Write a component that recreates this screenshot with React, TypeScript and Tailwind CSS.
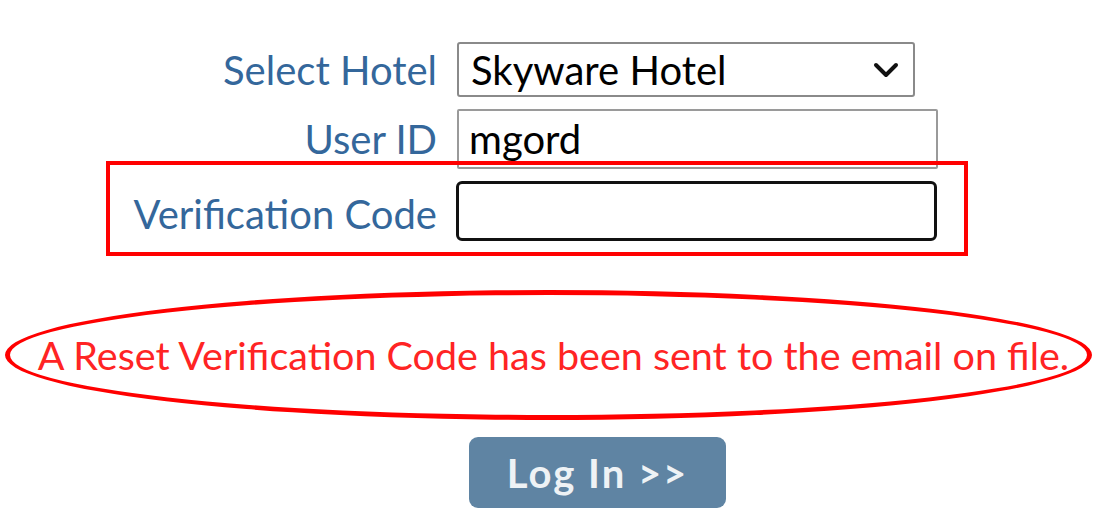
import React from 'react';

const labelCls = "text-[40px] leading-none text-[#34679b] text-right whitespace-nowrap";

const App = () => {
    return (
        <div className="min-h-[519px] w-[1102px] bg-white font-['Lato','Noto_Sans',sans-serif] overflow-hidden">
            <div className="flex flex-col pt-[42px]">
                {/* Select Hotel */}
                <div className="flex items-center">
                    <label className={`w-[437px] ${labelCls}`}>Select Hotel</label>
                    <div className="ml-[20px] flex h-[55px] w-[458px] items-center justify-between rounded-[3px] border-2 border-[#8a8a8a] pl-[12px] pr-[14px]">
                        <span className="text-[40px] leading-none text-black">Skyware Hotel</span>
                        <svg width="26" height="18" viewBox="0 0 26 18" fill="none">
                            <path d="M3 4l10 10L23 4" stroke="#111" strokeWidth="4" strokeLinecap="round" strokeLinejoin="round" />
                        </svg>
                    </div>
                </div>

                {/* User ID */}
                <div className="mt-[12px] flex items-center">
                    <label className={`w-[437px] ${labelCls}`}>User ID</label>
                    <div className="ml-[20px] flex h-[60px] w-[481px] items-start rounded-[2px] border-2 border-[#9a9a9a] pl-[10px] pt-[8px]">
                        <span className="text-[40px] leading-none text-black">mgord</span>
                    </div>
                </div>

                {/* Verification Code - highlighted */}
                <div className="-mt-[8px] ml-[106px] h-[95px] w-[862px] border-4 border-[#ff0000]">
                    <div className="mt-[16px] flex items-center">
                        <label className={`w-[327px] pt-[6px] ${labelCls}`}>Verification Code</label>
                        <div className="ml-[19px] h-[60px] w-[481px] rounded-[6px] border-[3px] border-[#111]" />
                    </div>
                </div>

                {/* message */}
                <div className="mt-[34px] ml-[5px] flex h-[130px] w-[1087px] items-center justify-center rounded-[50%] border-[5px] border-[#ff0000] pl-[10px]">
                    <span className="whitespace-nowrap text-[39.5px] leading-none text-[#ff2424]">
                        A Reset Verification Code has been sent to the email on file.
                    </span>
                </div>

                {/* button */}
                <div className="mt-[17px] ml-[469px]">
                    <button className="flex h-[71px] w-[257px] items-center justify-center rounded-[9px] bg-[#5f84a3] text-[40px] font-bold tracking-[2px] text-[#eef2f5]">
                        Log In &gt;&gt;
                    </button>
                </div>
            </div>
        </div>
    );
};

export default App;
